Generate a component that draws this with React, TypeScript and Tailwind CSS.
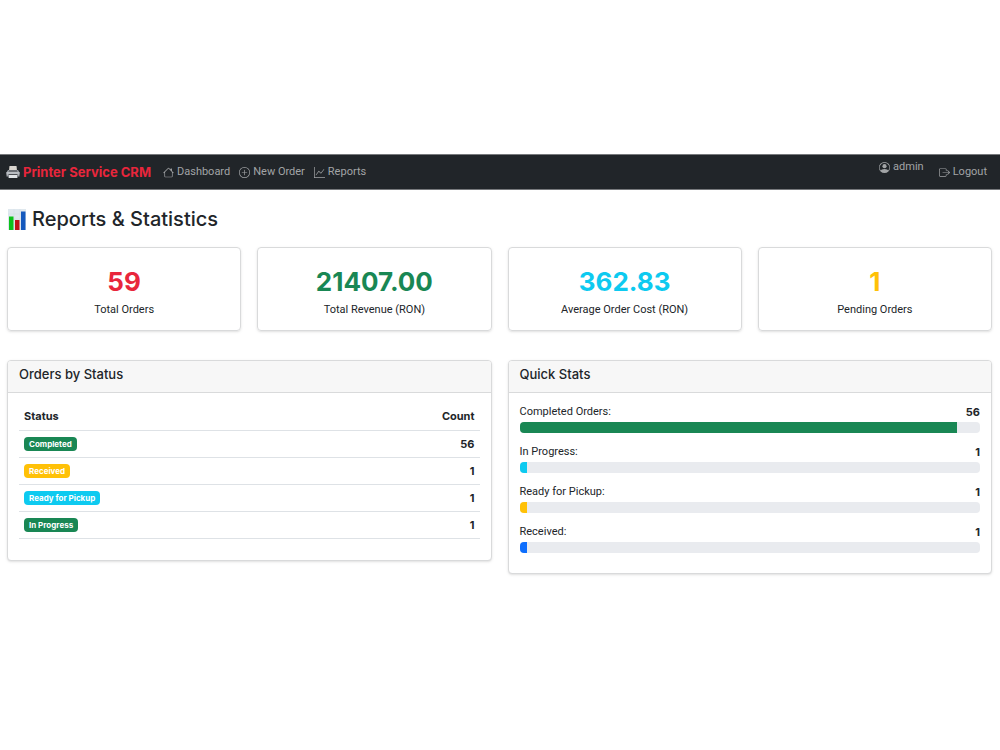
import type { ReactNode } from 'react';
import { BsBoxArrowRight, BsGraphUp, BsHouse, BsPersonCircle, BsPlusCircle } from 'react-icons/bs';

const totals = [
  { value: '59', label: 'Total Orders', color: 'text-[#e8263c]' },
  { value: '21407.00', label: 'Total Revenue (RON)', color: 'text-[#198754]' },
  { value: '362.83', label: 'Average Order Cost (RON)', color: 'text-[#0dcaf0]' },
  { value: '1', label: 'Pending Orders', color: 'text-[#ffc107]' },
];

const statuses = [
  { name: 'Completed', count: 56, color: 'bg-[#198754]' },
  { name: 'Received', count: 1, color: 'bg-[#ffc107]' },
  { name: 'Ready for Pickup', count: 1, color: 'bg-[#0dcaf0]' },
  { name: 'In Progress', count: 1, color: 'bg-[#198754]' },
];

const stats = [
  { name: 'Completed Orders:', count: 56, color: 'bg-[#198754]' },
  { name: 'In Progress:', count: 1, color: 'bg-[#0dcaf0]' },
  { name: 'Ready for Pickup:', count: 1, color: 'bg-[#ffc107]' },
  { name: 'Received:', count: 1, color: 'bg-[#0d6efd]' },
];

const TOTAL = 59;

function PrinterIcon() {
  return (
    <svg viewBox="0 0 28 28" className="size-3.5 shrink-0" aria-hidden="true">
      <path d="M7 2h14l1 9H6z" fill="#d9d5cf" />
      <path d="M4 10h20l3 5v8H1v-8z" fill="#9da1a7" />
      <path d="M1 14h26v5H1z" fill="#b9bdc2" />
      <path d="M6 10h16l1 4H5z" fill="#6b6f75" />
      <path d="M5 18h18v3H5z" fill="#4a4d52" />
      <path d="M6 20h16l1 6H5z" fill="#dfe3e6" />
    </svg>
  );
}

function ChartIcon() {
  return (
    <svg viewBox="0 0 36 42" className="h-[21px] w-[18px] shrink-0" aria-hidden="true">
      <path d="M0 0h36v42H0z" fill="#dfe8ee" />
      <path d="M0 10h36M0 20h36M0 30h36M12 0v42M24 0v42" stroke="#d0dde5" strokeWidth="1" />
      <path d="M2 15h9v27H2z" fill="#0cc21c" />
      <path d="M14 22h9v20h-9z" fill="#c01418" />
      <path d="M26 5h9v37h-9z" fill="#1559bd" />
    </svg>
  );
}

function NavLink({ icon, children }: { icon: ReactNode; children: ReactNode }) {
  return (
    <a href="#" className="flex items-center gap-[3px] text-[#a2a4a6] hover:text-white">
      {icon}
      {children}
    </a>
  );
}

function Panel({ title, children }: { title: string; children: ReactNode }) {
  return (
    <section className="overflow-hidden rounded border border-[#d9dadb] bg-white shadow-sm">
      <h2 className="border-b border-[#d9dadb] bg-[#f7f7f7] px-[11px] pt-[3px] pb-2 font-['Inter',sans-serif] text-[13px] leading-5 font-medium">
        {title}
      </h2>
      {children}
    </section>
  );
}

export default function App() {
  return (
    <div className="bg-white py-[154px] font-['Roboto',sans-serif] text-[11px] leading-4 text-[#212529]">
      <nav className="flex h-9 items-center border-y border-[#77797c] bg-[#212529] pr-[13px] pl-1.5">
        <a href="#" className="mr-3 flex items-center gap-[3px] font-['Inter',sans-serif] text-[13px] font-bold text-[#e8263c]">
          <PrinterIcon />
          Printer Service CRM
        </a>
        <div className="flex flex-1 gap-[9px]">
          <NavLink icon={<BsHouse className="size-[11px]" />}>Dashboard</NavLink>
          <NavLink icon={<BsPlusCircle className="size-[11px]" />}>New Order</NavLink>
          <NavLink icon={<BsGraphUp className="size-[11px]" />}>Reports</NavLink>
        </div>
        <div className="flex gap-[15px]">
          <span className="mb-2.5 flex items-center gap-[3px] text-[#a2a4a6]">
            <BsPersonCircle className="size-[11px]" />
            admin
          </span>
          <NavLink icon={<BsBoxArrowRight className="size-[11px]" />}>Logout</NavLink>
        </div>
      </nav>

      <main className="pt-4 pr-2 pl-[7px]">
        <h1 className="flex items-center gap-1.5 pl-px font-['Inter',sans-serif] text-[20px] leading-[26px] font-medium">
          <ChartIcon />
          Reports &amp; Statistics
        </h1>

        <div className="mt-[15px] grid grid-cols-4 gap-4">
          {totals.map((t) => (
            <div key={t.label} className="rounded border border-[#d9dadb] pt-4 pb-3 text-center shadow-sm">
              <div className={`font-['Inter',sans-serif] text-[26px] leading-9 font-bold ${t.color}`}>{t.value}</div>
              <div className="mt-0.5">{t.label}</div>
            </div>
          ))}
        </div>

        <div className="mt-[29px] grid grid-cols-2 items-start gap-4">
          <Panel title="Orders by Status">
            <div className="px-[11px] pt-[10px] pb-[21px]">
              <table className="w-full border-collapse font-['Inter',sans-serif]">
                <thead>
                  <tr className="h-[27px] border-b border-[#dee2e6]">
                    <th className="px-[5px] text-left font-bold">Status</th>
                    <th className="px-[5px] text-right font-bold">Count</th>
                  </tr>
                </thead>
                <tbody>
                  {statuses.map((s) => (
                    <tr key={s.name} className="h-[27px] border-b border-[#dee2e6]">
                      <td className="px-[5px]">
                        <span className={`block w-fit rounded px-[5px] text-[8px] leading-[14px] font-bold text-white ${s.color}`}>
                          {s.name}
                        </span>
                      </td>
                      <td className="px-[5px] text-right font-bold">{s.count}</td>
                    </tr>
                  ))}
                </tbody>
              </table>
            </div>
          </Panel>

          <Panel title="Quick Stats">
            <div className="flex flex-col gap-[11px] px-[11px] pt-[11px] pb-5">
              {stats.map((s) => (
                <div key={s.name}>
                  <div className="flex justify-between">
                    <span>{s.name}</span>
                    <strong className="font-['Inter',sans-serif] font-bold">{s.count}</strong>
                  </div>
                  <div className="mt-0.5 h-[11px] overflow-hidden rounded bg-[#e9ebef]">
                    <div className={`h-full ${s.color}`} style={{ width: `${(s.count / TOTAL) * 100}%` }} />
                  </div>
                </div>
              ))}
            </div>
          </Panel>
        </div>
      </main>
    </div>
  );
}
